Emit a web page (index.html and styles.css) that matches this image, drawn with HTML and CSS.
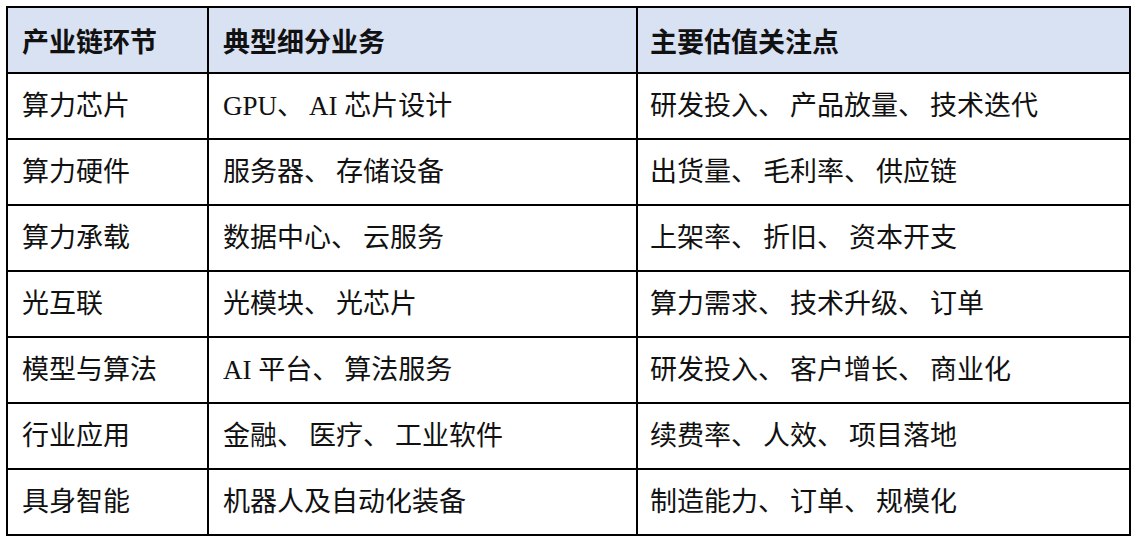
FILE: index.html
```html
<!DOCTYPE html>
<html lang="zh-CN">
<head>
<meta charset="utf-8">
<link rel="stylesheet" href="styles.css">
</head>
<body>
<table class="chain">
  <colgroup>
    <col class="c1"><col class="c2"><col class="c3">
  </colgroup>
  <thead>
    <tr><th>产业链环节</th><th>典型细分业务</th><th>主要估值关注点</th></tr>
  </thead>
  <tbody>
    <tr><td>算力芯片</td><td>GPU<span class="sep">、</span>AI 芯片设计</td><td>研发投入<span class="sep">、</span>产品放量<span class="sep">、</span>技术迭代</td></tr>
    <tr><td>算力硬件</td><td>服务器<span class="sep">、</span>存储设备</td><td>出货量<span class="sep">、</span>毛利率<span class="sep">、</span>供应链</td></tr>
    <tr><td>算力承载</td><td>数据中心<span class="sep">、</span>云服务</td><td>上架率<span class="sep">、</span>折旧<span class="sep">、</span>资本开支</td></tr>
    <tr><td>光互联</td><td>光模块<span class="sep">、</span>光芯片</td><td>算力需求<span class="sep">、</span>技术升级<span class="sep">、</span>订单</td></tr>
    <tr><td>模型与算法</td><td>AI 平台<span class="sep">、</span>算法服务</td><td>研发投入<span class="sep">、</span>客户增长<span class="sep">、</span>商业化</td></tr>
    <tr><td>行业应用</td><td>金融<span class="sep">、</span>医疗<span class="sep">、</span>工业软件</td><td>续费率<span class="sep">、</span>人效<span class="sep">、</span>项目落地</td></tr>
    <tr><td>具身智能</td><td>机器人及自动化装备</td><td>制造能力<span class="sep">、</span>订单<span class="sep">、</span>规模化</td></tr>
  </tbody>
</table>
</body>
</html>
```
FILE: styles.css
```css
html, body {
  margin: 0;
  padding: 0;
  background: #ffffff;
}
body {
  padding: 6px 0 0 6px;
  font-family: "Liberation Serif", "Noto Sans CJK SC", serif;
  color: #111111;
}
.chain {
  border-collapse: collapse;
  width: 1123px;
  table-layout: fixed;
}
.c1 { width: 201px; }
.c2 { width: 429px; }
.c3 { width: 493px; }
.chain th,
.chain td {
  border: 2px solid #000000;
  height: 64px;
  padding: 0 0 0 14px;
  text-align: left;
  vertical-align: middle;
  font-size: 27px;
  line-height: 1;
  white-space: nowrap;
}
.chain th:nth-child(3),
.chain td:nth-child(3) {
  padding-left: 12px;
}
.chain th {
  background: #d9e2f3;
  font-family: "Noto Sans CJK SC", sans-serif;
  font-weight: 700;
}
.chain td {
  font-weight: 400;
}
.sep {
  margin-right: 5px;
}
```
